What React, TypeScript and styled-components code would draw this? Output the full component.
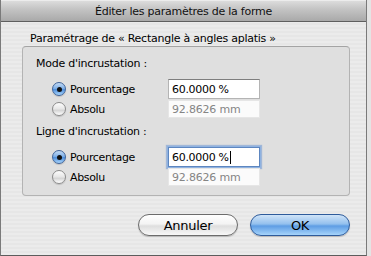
import React from "react";
import styled, { createGlobalStyle, css } from "styled-components";

const GlobalStyle = createGlobalStyle`
	html, body {
		margin: 0;
		padding: 0;
		background: #e4e4e4;
	}
	body {
		font-family: "DejaVu Sans", "Liberation Sans", sans-serif;
		color: #000;
	}
`;

const Window = styled.div`
	box-sizing: border-box;
	width: 367px;
	height: 256px;
	display: flex;
	flex-direction: column;
	border-left: 1px solid #7a7a7a;
	border-right: 1px solid #7a7a7a;
	border-bottom: 1px solid #5c5c5c;
	background: repeating-linear-gradient(0deg, #ebebeb 0 2px, #e6e6e6 2px 4px);
`;

const TitleBar = styled.div`
	box-sizing: border-box;
	height: 22px;
	display: flex;
	align-items: center;
	justify-content: center;
	background: linear-gradient(#dcdcdc 0%, #c4c4c4 40%, #a9a9a9 100%);
	border-top: 1px solid #ececec;
	border-bottom: 1px solid #5f5f5f;
	font-size: 11px;
	letter-spacing: -0.25px;
	color: #111;
`;

const Body = styled.div`
	display: flex;
	flex-direction: column;
	padding: 0 16px 0 21px;
`;

const Heading = styled.div`
	margin: 10px 0 0 8px;
	height: 14px;
	line-height: 14px;
	font-size: 11px;
	letter-spacing: -0.25px;
`;

const GroupBox = styled.div`
	box-sizing: border-box;
	display: flex;
	flex-direction: column;
	gap: 7px;
	padding: 10px 12px 9px 13px;
	border: 1px solid #b3b3b3;
	border-top-color: #a4a4a4;
	border-radius: 4px;
	background: #dfdfdf;
`;

const Section = styled.div`
	display: flex;
	flex-direction: column;
`;

const SectionLabel = styled.div`
	height: 14px;
	line-height: 14px;
	font-size: 11px;
	letter-spacing: -0.25px;
	margin-bottom: 8px;
`;

const Row = styled.div<{ $tall?: boolean }>`
	display: grid;
	grid-template-columns: 116px 92px;
	align-items: center;
	padding-left: 16px;
	height: ${(p) => (p.$tall ? 20 : 18)}px;
	margin-bottom: ${(p) => (p.$tall ? 1 : 0)}px;
`;

const Choice = styled.label`
	display: flex;
	align-items: center;
	gap: 4px;
	font-size: 11px;
	letter-spacing: -0.35px;
`;

const Radio = styled.span<{ $on?: boolean }>`
	box-sizing: border-box;
	position: relative;
	width: 14px;
	height: 14px;
	border-radius: 50%;
	border: 1px solid #8c8c8c;
	background: linear-gradient(#fdfdfd 0%, #e6e6e6 50%, #d4d4d4 60%, #ffffff 100%);
	box-shadow: 0 1px 1px rgba(0, 0, 0, 0.15);
	${(p) =>
		p.$on &&
		css`
			border-color: #40649a;
			background: linear-gradient(#c4dbf4 0%, #7fb0e8 45%, #4f8fdc 55%, #a9d5fb 100%);
			&::after {
				content: "";
				position: absolute;
				left: 3.5px;
				top: 3.5px;
				width: 5px;
				height: 5px;
				border-radius: 50%;
				background: #111;
			}
		`}
`;

const Field = styled.div<{ $focus?: boolean }>`
	box-sizing: border-box;
	height: 20px;
	display: flex;
	align-items: center;
	padding-left: 3px;
	background: #fff;
	border: 1px solid #b4b4b4;
	border-top-color: #7e7e7e;
	font-size: 11px;
	letter-spacing: -0.3px;
	${(p) =>
		p.$focus &&
		css`
			border-color: #5d86c0;
			box-shadow: 0 0 0 1px #8fb2e0, 0 0 1px 2px rgba(110, 150, 210, 0.55);
		`}
`;

const ReadOnly = styled.div`
	box-sizing: border-box;
	height: 18px;
	display: flex;
	align-items: center;
	padding-left: 3px;
	background: #fbfbfb;
	border: 1px solid #e6e6e6;
	font-size: 11px;
	letter-spacing: -0.2px;
	color: #858585;
`;

const Caret = styled.span`
	display: inline-block;
	width: 1px;
	height: 13px;
	margin-left: 1px;
	background: #000;
`;

const Actions = styled.div`
	display: flex;
	justify-content: flex-end;
	gap: 12px;
	margin: 18px 0 0 0;
`;

const AquaButton = styled.button<{ $primary?: boolean }>`
	box-sizing: border-box;
	width: 100px;
	height: 22px;
	border-radius: 11px;
	border: 1px solid #6c6c6c;
	background: linear-gradient(#ffffff 0%, #f3f3f3 45%, #dedede 55%, #f8f8f8 100%);
	box-shadow: 0 1px 1px rgba(0, 0, 0, 0.2);
	font-family: inherit;
	font-size: 13px;
	letter-spacing: -0.3px;
	color: #000;
	padding: 0;
	${(p) =>
		p.$primary &&
		css`
			border-color: #2e5b9b;
			background: linear-gradient(#d0e4f8 0%, #93c0ee 45%, #5e9de4 55%, #a6d4fb 100%);
		`}
`;

const options = [
	{ title: "Mode d'incrustation :", focus: false },
	{ title: "Ligne d'incrustation :", focus: true },
];

export default function App() {
	return (
		<>
			<GlobalStyle />
			<Window>
				<TitleBar>Éditer les paramètres de la forme</TitleBar>
				<Body>
					<Heading>Paramétrage de « Rectangle à angles aplatis »</Heading>
					<GroupBox>
						{options.map((opt) => (
							<Section key={opt.title}>
								<SectionLabel>{opt.title}</SectionLabel>
								<Row $tall>
									<Choice>
										<Radio $on />
										Pourcentage
									</Choice>
									<Field $focus={opt.focus}>
										60.0000 %{opt.focus && <Caret />}
									</Field>
								</Row>
								<Row>
									<Choice>
										<Radio />
										Absolu
									</Choice>
									<ReadOnly>92.8626 mm</ReadOnly>
								</Row>
							</Section>
						))}
					</GroupBox>
					<Actions>
						<AquaButton>Annuler</AquaButton>
						<AquaButton $primary>OK</AquaButton>
					</Actions>
				</Body>
			</Window>
		</>
	);
}
